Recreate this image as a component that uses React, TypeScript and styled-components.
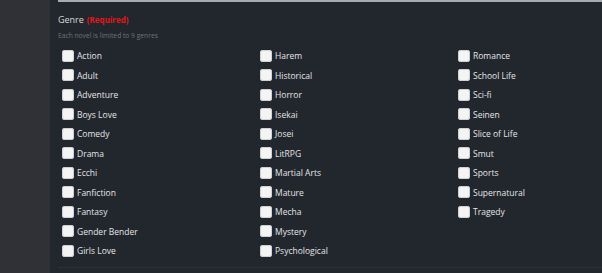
import styled, { createGlobalStyle } from 'styled-components';

const GlobalStyle = createGlobalStyle`
  html, body {
    margin: 0;
    padding: 0;
    background: #2f3136;
  }
  body {
    font-family: 'Open Sans', 'Noto Sans', sans-serif;
  }
`;

const Page = styled.div`
  display: flex;
  width: 602px;
  height: 273px;
  overflow: hidden;
`;

const Sidebar = styled.div`
  width: 50px;
  flex-shrink: 0;
  background: #2f3136;
`;

const Panel = styled.div`
  flex: 1;
  background: #22262d;
  display: flex;
  flex-direction: column;
  padding-left: 8px;
  padding-right: 2px;
`;

const InputEdge = styled.div`
  height: 2px;
  background: #a9abae;
`;

const Section = styled.div`
  flex: 1;
  border-bottom: 1px solid #2c3038;
  margin-bottom: 5px;
`;

const Title = styled.div`
  margin-top: 12px;
  font-size: 9px;
  color: #d8d9db;
  line-height: 12px;
`;

const Required = styled.span`
  color: #e3161b;
  font-weight: 700;
  font-size: 8px;
  margin-left: 3px;
`;

const Hint = styled.div`
  margin-top: 5px;
  font-size: 6.7px;
  color: #6f7379;
  line-height: 10px;
`;

const Grid = styled.div`
  display: grid;
  grid-template-columns: repeat(3, 198px);
  grid-template-rows: repeat(11, 19.5px);
  grid-auto-flow: column;
  margin-top: 5px;
  padding-left: 4px;
`;

const Option = styled.label`
  display: flex;
  align-items: center;
  gap: 3px;
  font-size: 8.5px;
  color: #e4e5e7;
`;

const Box = styled.span`
  width: 12px;
  height: 12px;
  border-radius: 3px;
  background: #f4f4f4;
  box-shadow: inset 0 0 0 1px #d0d0d0;
  flex-shrink: 0;
`;

const genres = [
  'Action', 'Adult', 'Adventure', 'Boys Love', 'Comedy', 'Drama', 'Ecchi', 'Fanfiction', 'Fantasy', 'Gender Bender', 'Girls Love',
  'Harem', 'Historical', 'Horror', 'Isekai', 'Josei', 'LitRPG', 'Martial Arts', 'Mature', 'Mecha', 'Mystery', 'Psychological',
  'Romance', 'School Life', 'Sci-fi', 'Seinen', 'Slice of Life', 'Smut', 'Sports', 'Supernatural', 'Tragedy',
];

export default function App() {
  return (
    <>
      <GlobalStyle />
      <Page>
        <Sidebar />
        <Panel>
          <InputEdge />
          <Section>
            <Title>
              Genre<Required>(Required)</Required>
            </Title>
            <Hint>Each novel is limited to 9 genres</Hint>
            <Grid>
              {genres.map((g) => (
                <Option key={g}>
                  <Box />
                  {g}
                </Option>
              ))}
            </Grid>
          </Section>
        </Panel>
      </Page>
    </>
  );
}
